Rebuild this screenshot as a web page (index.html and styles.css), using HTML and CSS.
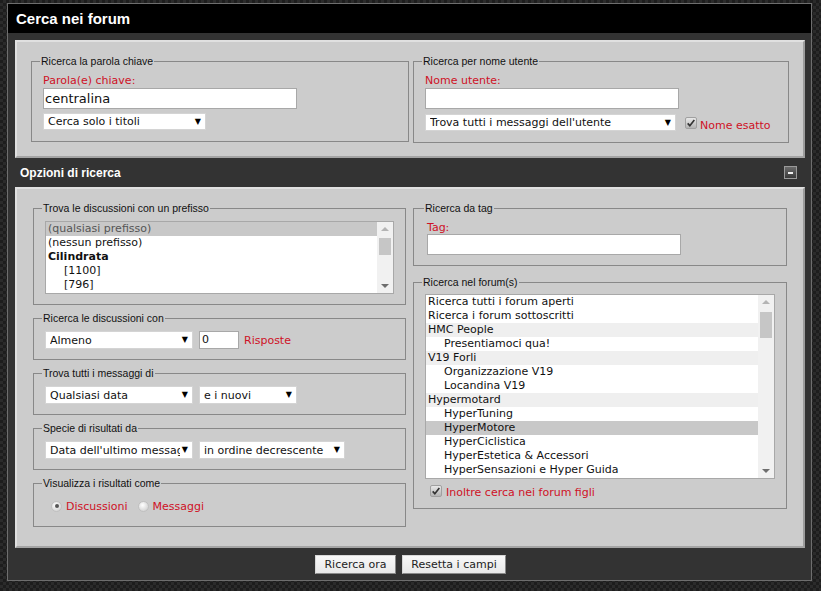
FILE: index.html
```html
<!DOCTYPE html>
<html lang="it">
<head>
<meta charset="utf-8">
<title>Cerca nei forum</title>
<link rel="stylesheet" href="styles.css">
</head>
<body>
<div class="wrap">
  <div class="head">Cerca nei forum</div>

  <div class="panel panel-top">
    <fieldset class="fs fs-top">
      <legend>Ricerca la parola chiave</legend>
      <div class="lbl">Parola(e) chiave:</div>
      <div class="txt txt-key">centralina</div>
      <div class="sel w163"><span class="sel-text">Cerca solo i titoli</span><span class="sel-arrow">▼</span></div>
    </fieldset>
    <fieldset class="fs fs-top">
      <legend>Ricerca per nome utente</legend>
      <div class="lbl">Nome utente:</div>
      <div class="txt txt-user"></div>
      <div class="row row-user">
        <div class="sel w251"><span class="sel-text">Trova tutti i messaggi dell'utente</span><span class="sel-arrow">▼</span></div>
        <span class="chk chk-exact"><svg viewBox="0 0 12 12" width="10" height="10"><path d="M2 6.5 L4.6 9.2 L10 2.5" fill="none" stroke="#333" stroke-width="2"/></svg></span>
        <span class="lbl-inline lbl-exact">Nome esatto</span>
      </div>
    </fieldset>
  </div>

  <div class="bar">
    <span class="bar-title">Opzioni di ricerca</span>
    <span class="collapse"><span class="collapse-minus"></span></span>
  </div>

  <div class="panel panel-opts">
    <div class="col">
      <fieldset class="fs fs-list">
        <legend>Trova le discussioni con un prefisso</legend>
        <div class="lb lb-prefix">
          <div class="lb-items">
            <div class="opt opt-sel-dim">(qualsiasi prefisso)</div>
            <div class="opt">(nessun prefisso)</div>
            <div class="opt opt-bold">Cilindrata</div>
            <div class="opt opt-child">[1100]</div>
            <div class="opt opt-child">[796]</div>
          </div>
          <div class="sb">
            <span class="arr-up"></span>
            <span class="thumb thumb-prefix"></span>
            <span class="sb-space"></span>
            <span class="arr-down"></span>
          </div>
        </div>
      </fieldset>

      <fieldset class="fs">
        <legend>Ricerca le discussioni con</legend>
        <div class="row">
          <div class="sel w148"><span class="sel-text">Almeno</span><span class="sel-arrow">▼</span></div>
          <div class="txt txt-num">0</div>
          <span class="lbl-inline">Risposte</span>
        </div>
      </fieldset>

      <fieldset class="fs">
        <legend>Trova tutti i messaggi di</legend>
        <div class="row">
          <div class="sel w148"><span class="sel-text">Qualsiasi data</span><span class="sel-arrow">▼</span></div>
          <div class="sel w98"><span class="sel-text">e i nuovi</span><span class="sel-arrow">▼</span></div>
        </div>
      </fieldset>

      <fieldset class="fs">
        <legend>Specie di risultati da</legend>
        <div class="row">
          <div class="sel w148"><span class="sel-text">Data dell'ultimo messaggio</span><span class="sel-arrow">▼</span></div>
          <div class="sel w146"><span class="sel-text">in ordine decrescente</span><span class="sel-arrow">▼</span></div>
        </div>
      </fieldset>

      <fieldset class="fs fs-radio">
        <legend>Visualizza i risultati come</legend>
        <div class="row row-radio">
          <span class="radio radio-on"><span class="radio-dot"></span></span>
          <span class="lbl-inline">Discussioni</span>
          <span class="radio radio-second"></span>
          <span class="lbl-inline">Messaggi</span>
        </div>
      </fieldset>
    </div>

    <div class="col">
      <fieldset class="fs fs-tag">
        <legend>Ricerca da tag</legend>
        <div class="lbl lbl-tag">Tag:</div>
        <div class="txt txt-tag"></div>
      </fieldset>

      <fieldset class="fs fs-forum">
        <legend>Ricerca nel forum(s)</legend>
        <div class="lb lb-forum">
          <div class="lb-items">
            <div class="opt">Ricerca tutti i forum aperti</div>
            <div class="opt">Ricerca i forum sottoscritti</div>
            <div class="opt opt-cat">HMC People</div>
            <div class="opt opt-child">Presentiamoci qua!</div>
            <div class="opt opt-cat">V19 Forli</div>
            <div class="opt opt-child">Organizzazione V19</div>
            <div class="opt opt-child">Locandina V19</div>
            <div class="opt opt-cat">Hypermotard</div>
            <div class="opt opt-child">HyperTuning</div>
            <div class="opt opt-child opt-sel">HyperMotore</div>
            <div class="opt opt-child">HyperCiclistica</div>
            <div class="opt opt-child">HyperEstetica &amp; Accessori</div>
            <div class="opt opt-child">HyperSensazioni e Hyper Guida</div>
          </div>
          <div class="sb">
            <span class="arr-up"></span>
            <span class="thumb thumb-forum"></span>
            <span class="sb-space"></span>
            <span class="arr-down"></span>
          </div>
        </div>
        <div class="row row-child">
          <span class="chk"><svg viewBox="0 0 12 12" width="10" height="10"><path d="M2 6.5 L4.6 9.2 L10 2.5" fill="none" stroke="#333" stroke-width="2"/></svg></span>
          <span class="lbl-inline lbl-child">Inoltre cerca nei forum figli</span>
        </div>
      </fieldset>
    </div>
  </div>

  <div class="actions">
    <button class="btn btn-search">Ricerca ora</button>
    <button class="btn btn-reset">Resetta i campi</button>
  </div>
</div>
</body>
</html>
```

FILE: styles.css
```css
* { box-sizing: border-box; }

html, body { height: 100%; }

body {
  margin: 0;
  background-color: #1d1d1d;
  background-image:
    linear-gradient(45deg, #2b2b2b 25%, transparent 25%, transparent 75%, #2b2b2b 75%),
    linear-gradient(45deg, #2b2b2b 25%, transparent 25%, transparent 75%, #2b2b2b 75%);
  background-size: 6px 6px;
  background-position: 0 0, 3px 3px;
  font-family: "DejaVu Sans", Verdana, sans-serif;
  font-size: 11px;
  color: #111;
}

.wrap {
  margin: 3px 0 0 7px;
  width: 805px;
  height: 578px;
  border: 1px solid #6e6e6e;
  background: #333333;
}

.head {
  height: 29px;
  line-height: 29px;
  background: #000;
  color: #fff;
  padding-left: 8px;
  font-family: "Liberation Sans", Arial, sans-serif;
  font-weight: bold;
  font-size: 15px;
}

.panel {
  margin: 7px 6px 0 7px;
  background: #cccccc;
  border: 2px solid;
  border-color: #e0e0e0 #9c9c9c #a4a4a4 #e0e0e0;
  display: grid;
}

.panel-top {
  padding: 13px 15px 13px 14px;
  grid-template-columns: 378px 376px;
  column-gap: 4px;
  align-items: start;
}

.panel-top .fs { margin: 0; }

.panel-opts {
  margin-top: 0;
  padding: 13px 17px 19px 16px;
  grid-template-columns: 373px 374px;
  column-gap: 7px;
  align-items: start;
}

.bar {
  height: 29px;
  display: flex;
  align-items: center;
  justify-content: space-between;
  padding: 0 14px 0 12px;
}

.bar-title {
  color: #fff;
  font-family: "Liberation Sans", Arial, sans-serif;
  font-weight: bold;
  font-size: 12px;
}

.collapse {
  width: 13px;
  height: 13px;
  border: 1px solid #9a9a9a;
  background: linear-gradient(#6a6a6a, #3a3a3a);
  display: flex;
  align-items: center;
  justify-content: center;
}

.collapse-minus {
  width: 5px;
  height: 2px;
  background: #f0f0f0;
}

.col { display: flex; flex-direction: column; }

.fs {
  margin: 0 0 7px;
  min-width: 0;
  border: 1px solid #888888;
  padding: 6px 11px 10px;
}

.fs:last-child { margin-bottom: 0; }

.fs legend {
  padding: 0 1px;
  margin-left: -3px;
  font-family: "Liberation Sans", Arial, sans-serif;
  font-size: 10.5px;
  line-height: 13px;
  color: #111;
}

.fs-top { padding-bottom: 11px; }
.fs-tag { padding: 6px 13px 10px; margin-bottom: 10px; }
.fs-forum { padding-top: 5px; padding-bottom: 9px; }

.lbl {
  color: #cf1126;
  line-height: 14px;
  height: 14px;
}

.lbl-tag { line-height: 13px; height: 13px; }

.lbl-inline { color: #cf1126; white-space: nowrap; }

.txt {
  background: #fff;
  border: 1px solid #a8a8a8;
  height: 21px;
  line-height: 19px;
  padding: 0 2px;
  color: #111;
}

.txt-key { width: 254px; font-size: 13px; margin-bottom: 4px; padding-left: 1px; }
.txt-user { width: 254px; margin-bottom: 5px; }
.txt-tag { width: 254px; }
.txt-num { width: 40px; height: 18px; line-height: 16px; margin-left: 6px; padding-left: 2px; }

.row { display: flex; align-items: center; }

.row-user { height: 17px; align-items: flex-start; }

.sel {
  display: flex;
  align-items: center;
  height: 17px;
  background: #fff;
  border: 1px solid #d4d4d4;
  padding: 0 4px 0 4px;
}

.fs .row .sel { height: 18px; }
.fs .row-user .sel { height: 17px; }
.row .sel + .sel { margin-left: 6px; }

.sel-text {
  flex: 1;
  overflow: hidden;
  white-space: nowrap;
}

.sel-arrow {
  font-size: 8px;
  line-height: 1;
  margin-left: 2px;
  color: #000;
}

.w163 { width: 163px; }
.w251 { width: 251px; }
.w148 { width: 148px; }
.w98 { width: 98px; }
.w146 { width: 146px; }

.txt-num + .lbl-inline { margin-left: 5px; }

.chk {
  width: 12px;
  height: 12px;
  border: 1px solid #a0a0a0;
  border-radius: 2px;
  background: linear-gradient(#e8e8e8, #b4b4b4);
  display: inline-flex;
  align-items: center;
  justify-content: center;
  flex: none;
}

.chk-exact { margin-left: 9px; margin-top: 3px; }
.lbl-exact { margin-left: 3px; margin-top: 5px; line-height: 13px; }

.row-radio { height: 20px; padding-left: 6px; }

.radio {
  width: 11px;
  height: 11px;
  border-radius: 50%;
  border: 1px solid #c0c0c0;
  background: radial-gradient(circle at 40% 35%, #ffffff, #d8d8d8 70%, #c4c4c4);
  display: inline-flex;
  align-items: center;
  justify-content: center;
  flex: none;
  margin-right: 4px;
}

.radio-dot {
  width: 4px;
  height: 4px;
  border-radius: 50%;
  background: #555;
}

.radio-second { margin-left: 10px; }

.lb {
  display: flex;
  background: #fff;
  border: 1px solid #a8a8a8;
  overflow: hidden;
}

.lb-prefix { height: 73px; }
.lb-forum { height: 185px; }

.lb-items {
  flex: 1;
  min-width: 0;
  overflow: hidden;
}

.opt {
  height: 14px;
  line-height: 14px;
  padding-left: 2px;
  white-space: nowrap;
  color: #111;
}

.opt-child { padding-left: 18px; }
.opt-bold { font-weight: bold; }
.opt-cat { background: #efefef; }
.opt-sel { background: #c8c8c8; }
.opt-sel-dim { background: #c8c8c8; color: #555; }

.sb {
  width: 16px;
  flex: none;
  background: #f1f1f1;
  display: flex;
  flex-direction: column;
  align-items: center;
  padding: 5px 0 5px;
}

.arr-up {
  width: 0;
  height: 0;
  border-left: 4px solid transparent;
  border-right: 4px solid transparent;
  border-bottom: 4px solid #b4b4b4;
  flex: none;
}

.arr-down {
  width: 0;
  height: 0;
  border-left: 4px solid transparent;
  border-right: 4px solid transparent;
  border-top: 4px solid #6e6e6e;
  flex: none;
}

.thumb {
  width: 12px;
  background: #c6c6c6;
  flex: none;
}

.thumb-prefix { height: 17px; margin-top: 7px; }
.thumb-forum { height: 26px; margin-top: 8px; }

.sb-space { flex: 1; }

.row-child { margin-top: 4px; height: 16px; padding-left: 5px; }
.lbl-child { margin-left: 4px; margin-top: 3px; }

.actions {
  display: flex;
  justify-content: center;
  gap: 6px;
  padding: 7px 0 0 2px;
}

.btn {
  height: 19px;
  padding: 0;
  font-family: "DejaVu Sans", Verdana, sans-serif;
  font-size: 11px;
  color: #222;
  background: linear-gradient(#f8f8f8, #e8e8e8);
  border: 1px solid;
  border-color: #d8d8d8 #8a8a8a #8a8a8a #d8d8d8;
  border-radius: 0;
}

.btn-search { width: 81px; }
.btn-reset { width: 104px; }
```
